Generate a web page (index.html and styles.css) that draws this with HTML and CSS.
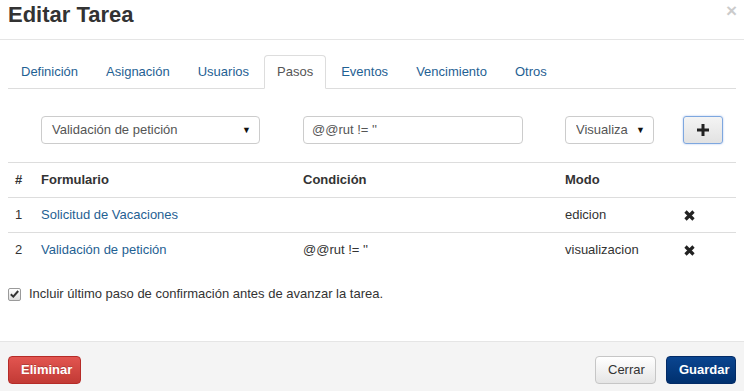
FILE: index.html
```html
<!DOCTYPE html>
<html lang="es">
<head>
<meta charset="utf-8">
<title>Editar Tarea</title>
<link rel="stylesheet" href="styles.css">
</head>
<body>
<div class="modal">
  <div class="modal-header">
    <h3 class="title">Editar Tarea</h3>
    <span class="close">×</span>
  </div>
  <div class="modal-body">
    <ul class="tabs">
      <li><a>Definición</a></li>
      <li><a>Asignación</a></li>
      <li><a>Usuarios</a></li>
      <li class="active"><a>Pasos</a></li>
      <li><a>Eventos</a></li>
      <li><a>Vencimiento</a></li>
      <li><a>Otros</a></li>
    </ul>
    <div class="grid form-row">
      <div class="cell"></div>
      <div class="cell"><div class="select sel-form"><span>Validación de petición</span><i class="caret">▼</i></div></div>
      <div class="cell"><div class="input">@@rut != ''</div></div>
      <div class="cell"><div class="select sel-mode"><span>Visualiza</span><i class="caret">▼</i></div></div>
      <div class="cell"><button class="btn-add"><svg width="12" height="12" viewBox="0 0 12 12"><path d="M4.5 0h3v4.5H12v3H7.5V12h-3V7.5H0v-3h4.5z" fill="#222"/></svg></button></div>
    </div>
    <div class="grid thead">
      <div class="cell">#</div>
      <div class="cell">Formulario</div>
      <div class="cell">Condición</div>
      <div class="cell">Modo</div>
      <div class="cell"></div>
    </div>
    <div class="grid trow">
      <div class="cell">1</div>
      <div class="cell"><a class="link">Solicitud de Vacaciones</a></div>
      <div class="cell"></div>
      <div class="cell">edicion</div>
      <div class="cell"><svg class="del" width="11" height="11" viewBox="0 0 11 11"><path d="M1.5 1.5L9.5 9.5M9.5 1.5L1.5 9.5" stroke="#222" stroke-width="3.2" stroke-linecap="butt"/></svg></div>
    </div>
    <div class="grid trow">
      <div class="cell">2</div>
      <div class="cell"><a class="link">Validación de petición</a></div>
      <div class="cell">@@rut != ''</div>
      <div class="cell">visualizacion</div>
      <div class="cell"><svg class="del" width="11" height="11" viewBox="0 0 11 11"><path d="M1.5 1.5L9.5 9.5M9.5 1.5L1.5 9.5" stroke="#222" stroke-width="3.2" stroke-linecap="butt"/></svg></div>
    </div>
    <label class="check"><span class="box"><svg width="9" height="8" viewBox="0 0 9 8"><path d="M0.8 4.2L3.3 6.6L8.2 1" stroke="#333" stroke-width="2" fill="none"/></svg></span>Incluir último paso de confirmación antes de avanzar la tarea.</label>
  </div>
  <div class="modal-footer">
    <button class="btn btn-danger">Eliminar</button>
    <div class="right">
      <button class="btn btn-default">Cerrar</button>
      <button class="btn btn-primary">Guardar</button>
    </div>
  </div>
</div>
</body>
</html>
```
FILE: styles.css
```css
* { box-sizing: border-box; }
html, body { margin: 0; padding: 0; background: #fff; }
body {
  font-family: "Liberation Sans", Arial, sans-serif;
  font-size: 13px;
  line-height: 18px;
  color: #333;
  width: 744px;
  height: 391px;
  overflow: hidden;
}
.modal { display: flex; flex-direction: column; height: 391px; }
.modal-header {
  height: 40px;
  border-bottom: 1px solid #e5e5e5;
  display: flex;
  justify-content: space-between;
  padding: 0 7px 0 8px;
}
.title {
  margin: 0;
  font-size: 22px;
  font-weight: bold;
  line-height: 30px;
  color: #333;
}
.close {
  font-size: 19px;
  font-weight: bold;
  color: #000;
  opacity: 0.2;
  line-height: 22px;
}
.modal-body { flex: 1; padding: 15px 8px 0 8px; }
.tabs {
  list-style: none;
  margin: 0;
  padding: 0;
  display: flex;
  border-bottom: 1px solid #ddd;
}
.tabs li { margin-right: 2px; margin-bottom: -1px; }
.tabs a {
  display: block;
  padding: 7px 12px;
  line-height: 18px;
  border: 1px solid transparent;
  border-radius: 4px 4px 0 0;
  color: #1f6193;
}
.tabs li.active a {
  color: #555;
  background: #fff;
  border-color: #ddd #ddd transparent;
}
.grid {
  display: grid;
  grid-template-columns: 26px 262px 262px 118px 60px;
}
.cell { padding: 8px 7px; }
.form-row { margin-top: 19px; margin-bottom: 10px; }
.select, .input {
  height: 28px;
  border: 1px solid #ccc;
  border-radius: 4px;
  background: #fff;
  display: flex;
  align-items: center;
  padding: 0 8px 0 10px;
  color: #555;
}
.input { width: 220px; padding-left: 8px; }
.sel-form { width: 219px; justify-content: space-between; }
.sel-mode { width: 89px; justify-content: space-between; }
.sel-mode span { width: 58px; overflow: hidden; white-space: nowrap; }
.caret { font-style: normal; font-size: 9px; color: #111; }
.btn-add {
  width: 40px;
  height: 28px;
  border: 1px solid #7ea7df;
  border-radius: 3px;
  background: linear-gradient(#f4f4f4, #e2e2e2);
  box-shadow: 0 0 2px rgba(82,130,220,0.5);
  display: flex;
  align-items: center;
  justify-content: center;
  padding: 0;
}
.thead { border-top: 1px solid #ddd; font-weight: bold; }
.trow { border-top: 1px solid #ddd; }
.link { color: #1f6193; }
.del { display: block; margin-top: 4px; margin-left: 1px; }
.check {
  display: flex;
  align-items: center;
  margin-top: 18px;
  color: #333;
}
.box {
  width: 13px;
  height: 13px;
  border: 1px solid #9a9a9a;
  border-radius: 2px;
  background: linear-gradient(#fff, #ddd);
  display: flex;
  align-items: center;
  justify-content: center;
  margin-right: 8px;
}
.modal-footer {
  height: 50px;
  border-top: 1px solid #e5e5e5;
  background: #f4f4f4;
  display: flex;
  justify-content: space-between;
  align-items: flex-start;
  padding: 14px 8px 0 8px;
}
.right { display: flex; gap: 10px; }
.btn {
  height: 28px;
  border-radius: 4px;
  font-family: "Liberation Sans", Arial, sans-serif;
  font-size: 13px;
  padding: 0 12px;
  line-height: 26px;
}
.btn-danger {
  width: 73px;
  color: #fff;
  font-weight: bold;
  border: 1px solid #b52b27;
  background: linear-gradient(#e25550, #c23a35);
  text-shadow: 0 -1px 0 rgba(0,0,0,0.2);
}
.btn-default {
  width: 61px;
  color: #333;
  border: 1px solid #c6c6c6;
  background: linear-gradient(#fff, #e5e5e5);
}
.btn-primary {
  width: 70px;
  color: #fff;
  font-weight: bold;
  border: 1px solid #032b66;
  background: linear-gradient(#0a4590, #00306e);
}
```
